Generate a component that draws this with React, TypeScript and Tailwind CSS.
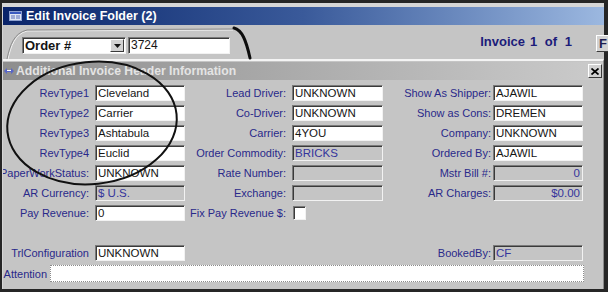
import React from "react";

const narrow = "font-['Liberation_Sans',Arial,sans-serif]";
const sunken =
  "border-t border-l border-b border-r border-t-[#7a7a7a] border-l-[#7a7a7a] border-b-[#f2f2f2] border-r-[#f2f2f2] shadow-[inset_1px_1px_0_#3a3a3a]";
const raised =
  "border-t border-l border-b border-r border-t-white border-l-white border-b-[#3a3a3a] border-r-[#3a3a3a] bg-[#d2d2d2]";

function Label({ w, children }: { w: string; children?: React.ReactNode }) {
  return (
    <div className={`flex shrink-0 justify-end whitespace-nowrap text-[#29298a] ${w}`}>
      <span>{children}</span>
    </div>
  );
}

function Box({
  w,
  ml,
  value,
  gray,
  right,
}: {
  w: string;
  ml: string;
  value?: string;
  gray?: boolean;
  right?: boolean;
}) {
  return (
    <div
      className={`h-[16px] shrink-0 overflow-hidden whitespace-nowrap px-[2px] text-[11.5px] leading-[14px] ${sunken} ${w} ${ml} ${
        gray ? "bg-[#c5c5c5] text-[#34349c]" : "bg-white text-[#161616]"
      } ${right ? "text-right" : ""}`}
    >
      {value}
    </div>
  );
}

type Cell = { label: string; value?: string; gray?: boolean; right?: boolean } | null;

const rows: [Cell, Cell, Cell][] = [
  [{ label: "RevType1", value: "Cleveland" }, { label: "Lead Driver:", value: "UNKNOWN" }, { label: "Show As Shipper:", value: "AJAWIL" }],
  [{ label: "RevType2", value: "Carrier" }, { label: "Co-Driver:", value: "UNKNOWN" }, { label: "Show as Cons:", value: "DREMEN" }],
  [{ label: "RevType3", value: "Ashtabula" }, { label: "Carrier:", value: "4YOU" }, { label: "Company:", value: "UNKNOWN" }],
  [{ label: "RevType4", value: "Euclid" }, { label: "Order Commodity:", value: "BRICKS", gray: true }, { label: "Ordered By:", value: "AJAWIL" }],
  [{ label: "PaperWorkStatus:", value: "UNKNOWN" }, { label: "Rate Number:", value: "", gray: true }, { label: "Mstr Bill #:", value: "0", gray: true, right: true }],
  [{ label: "AR Currency:", value: "$ U.S.", gray: true }, { label: "Exchange:", value: "", gray: true }, { label: "AR Charges:", value: "$0.00", gray: true, right: true }],
];

function Row({ cells }: { cells: [Cell, Cell, Cell] }) {
  const [a, b, c] = cells;
  return (
    <div className="flex h-[20px] items-center">
      <Label w="w-[86px]">{a?.label}</Label>
      {a ? <Box w="w-[90px]" ml="ml-[6px]" value={a.value} gray={a.gray} right={a.right} /> : <div className="ml-[6px] w-[90px]" />}
      <Label w="w-[101px]">{b?.label}</Label>
      {b ? <Box w="w-[91px]" ml="ml-[6px]" value={b.value} gray={b.gray} right={b.right} /> : <div className="ml-[6px] w-[91px]" />}
      <Label w="w-[108px]">{c?.label}</Label>
      {c ? <Box w="w-[90px]" ml="ml-[2px]" value={c.value} gray={c.gray} right={c.right} /> : null}
    </div>
  );
}

export default function App() {
  return (
    <div className="relative h-[292px] w-[608px] overflow-hidden bg-[#262626] pl-[2px] pt-[3px]">
      <div className="flex h-[286px] w-[602px] flex-col border-l border-t-[4px] border-[#d6d6d6] bg-[#c5c5c5]">
        {/* title bar */}
        <div className="flex h-[18px] shrink-0 items-center bg-gradient-to-r from-[#0a246a] via-[#3a5a9a] to-[#9cb8e0] pl-[6px]">
          <svg width="13" height="10" viewBox="0 0 13 10" className="shrink-0">
            <rect x="0.5" y="0.5" width="12" height="9" fill="#dfe6f4" stroke="#8da0d0" />
            <rect x="1" y="1" width="11" height="2" fill="#3a5ac0" />
            <path d="M2 5h4M2 7h4M7 5h4M7 7h4" stroke="#5a6fb8" />
          </svg>
          <span className="ml-[4px] font-['Liberation_Sans',Arial,sans-serif] text-[12.5px] font-bold leading-none text-white">
            Edit Invoice Folder (2)
          </span>
        </div>

        {/* order selector section */}
        <div className="flex h-[34px] shrink-0 items-start pl-[19px] pt-[12px]">
          <div className={`flex h-[17px] w-[104px] items-center bg-white ${sunken}`}>
            <span className={`${narrow} ml-[2px] text-[13px] font-bold leading-none text-[#141414]`}>Order #</span>
            <div className={`ml-auto mr-[1px] flex h-[13px] w-[14px] items-center justify-center ${raised}`}>
              <svg width="7" height="4" viewBox="0 0 7 4">
                <path d="M0 0h7L3.5 4z" fill="#111" />
              </svg>
            </div>
          </div>
          <div className={`${narrow} ml-[2px] h-[17px] w-[102px] bg-white px-[2px] text-[12px] leading-[15px] text-[#141414] ${sunken}`}>
            3724
          </div>
          <div className="flex-1" />
          <div className="mt-[-3px] flex font-['Liberation_Sans',Arial,sans-serif] text-[13px] font-bold leading-[15px] text-[#1c1c7a]">
            <span>Invoice</span>
            <span className="ml-[5px] [word-spacing:4px]">1 of 1</span>
          </div>
          <div
            className={`ml-[24px] mr-[-8px] mt-[-2px] flex h-[17px] w-[16px] shrink-0 items-center pl-[2px] font-['Liberation_Sans',Arial,sans-serif] text-[13px] font-bold text-[#1c1c50] ${raised}`}
          >
            F
          </div>
        </div>

        {/* sub panel */}
        <div className="flex min-h-0 flex-1 flex-col border-t-2 border-r border-t-[#f4f4f4] border-r-[#8a8a8a] pt-[1px]">
          <div className="flex h-[18px] shrink-0 items-center bg-gradient-to-r from-[#8e8e8e] to-[#cbcbcb]">
            <svg width="10" height="6" viewBox="0 0 10 6" className="ml-[1px] shrink-0">
              <path d="M0 3l3-3v2h4V0l3 3-3 3V4H3v2z" fill="#5866c8" />
              <path d="M3 2.5h4" stroke="#fff" strokeWidth="1" />
            </svg>
            <span className="ml-[2px] font-['Liberation_Sans',Arial,sans-serif] text-[12.2px] font-bold leading-none text-[#e4e4e4]">
              Additional Invoice Header Information
            </span>
            <div className={`ml-auto mr-[1px] flex h-[14px] w-[14px] items-center justify-center ${raised}`}>
              <svg width="8" height="7" viewBox="0 0 8 7">
                <path d="M0.5 0.5l7 6M7.5 0.5l-7 6" stroke="#000" strokeWidth="1.7" />
              </svg>
            </div>
          </div>

          <div className={`${narrow} min-h-0 flex-1 overflow-hidden pt-[3px] text-[11px] leading-[14px]`}>
            {rows.map((r, i) => (
              <Row key={i} cells={r} />
            ))}
            <div className="flex h-[20px] items-center">
              <Label w="w-[86px]">Pay Revenue:</Label>
              <Box w="w-[90px]" ml="ml-[6px]" value="0" />
              <Label w="w-[101px]">Fix Pay Revenue $:</Label>
              <div className={`ml-[7px] h-[14px] w-[13px] bg-white ${sunken}`} />
            </div>
            <div className="h-[20px]" />
            <Row cells={[{ label: "TrlConfiguration", value: "UNKNOWN" }, null, { label: "BookedBy:", value: "CF", gray: true }]} />
            <div className="flex h-[21px] items-center">
              <Label w="w-[44px]">Attention</Label>
              <div className="ml-[3px] h-[17px] w-[534px] border border-dotted border-[#8c8c8c] bg-white" />
            </div>
          </div>
        </div>
      </div>

      {/* hand-drawn annotations over the window */}
      <svg className="pointer-events-none absolute left-0 top-0" width="608" height="292" viewBox="0 0 608 292">
        <path d="M8 59 C 11 46, 15 34, 27 31 L 233 30" fill="none" stroke="#f2f2f2" strokeWidth="1" />
        <path d="M7 59 C 10 45, 14 33, 27 30 L 233 29" fill="none" stroke="#8a8a8a" strokeWidth="1" />
        <path d="M234 28 C 242 30, 246 40, 250 58" fill="none" stroke="#0d0d0d" strokeWidth="3" strokeLinecap="round" />
        <ellipse cx="92" cy="123" rx="85" ry="61" transform="rotate(-6 92 123)" fill="none" stroke="#111" strokeWidth="2" />
      </svg>
    </div>
  );
}
